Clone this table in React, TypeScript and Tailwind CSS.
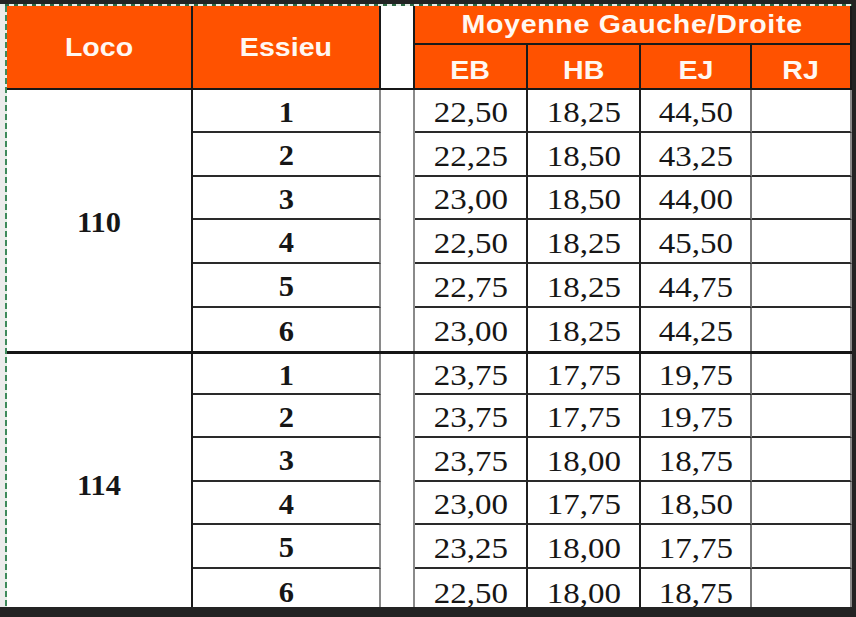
import React from "react";

const COLS = "grid grid-cols-[186px_188px_34px_113px_113px_111px_100px]";
const SANS = "font-['Liberation_Sans',Arial,sans-serif]";
const SERIF = "font-['Liberation_Serif','Times_New_Roman',serif]";

type Group = { loco: string; rows: string[][]; heights: number[] };

const groups: Group[] = [
  {
    loco: "110",
    heights: [43, 44, 43, 44, 44, 43],
    rows: [
      ["22,50", "18,25", "44,50"],
      ["22,25", "18,50", "43,25"],
      ["23,00", "18,50", "44,00"],
      ["22,50", "18,25", "45,50"],
      ["22,75", "18,25", "44,75"],
      ["23,00", "18,25", "44,25"],
    ],
  },
  {
    loco: "114",
    heights: [41, 43, 44, 43, 44, 44],
    rows: [
      ["23,75", "17,75", "19,75"],
      ["23,75", "17,75", "19,75"],
      ["23,75", "18,00", "18,75"],
      ["23,00", "17,75", "18,50"],
      ["23,25", "18,00", "17,75"],
      ["22,50", "18,00", "18,75"],
    ],
  },
];

function HeaderText({ children, wide }: { children: React.ReactNode; wide?: boolean }) {
  return (
    <span
      className={`${SANS} text-[26px] font-bold text-[#fff8f2] leading-none inline-block scale-x-110 ${
        wide ? "tracking-[0.6px]" : ""
      }`}
    >
      {children}
    </span>
  );
}

function Num({ children, bold }: { children: React.ReactNode; bold?: boolean }) {
  return (
    <span
      className={`${SERIF} ${bold ? "font-bold text-[29px] scale-x-105" : "text-[30px] scale-x-110"} text-[#161616] leading-none inline-block pt-[3px]`}
    >
      {children}
    </span>
  );
}

function Header() {
  return (
    <div className={`${COLS} grid-rows-[39px_43px] border-b-2 border-b-[#161616]`}>
      <div className="row-span-2 bg-[#ff5200] border-r-2 border-r-[#1a1a1a] flex items-center justify-center">
        <HeaderText>Loco</HeaderText>
      </div>
      <div className="row-span-2 bg-[#ff5200] border-r-2 border-r-[#1a1a1a] flex items-center justify-center">
        <HeaderText>Essieu</HeaderText>
      </div>
      <div className="row-span-2 bg-white border-r-2 border-r-[#1a1a1a]" />
      <div className="col-span-4 bg-[#ff5200] border-b-2 border-b-[#1a1a1a] border-r-2 border-r-[#1a1a1a] flex items-center justify-center pb-[2px]">
        <HeaderText wide>Moyenne Gauche/Droite</HeaderText>
      </div>
      {["EB", "HB", "EJ", "RJ"].map((h) => (
        <div
          key={h}
          className="bg-[#ff5200] border-r-2 border-r-[#1a1a1a] flex items-center justify-center pt-[6px]"
        >
          <HeaderText>{h}</HeaderText>
        </div>
      ))}
    </div>
  );
}

function GroupBlock({ g }: { g: Group }) {
  const rowsTpl = g.heights.map((h) => `${h}px`).join(" ");
  return (
    <div className={`${COLS} border-b-[3px] border-b-[#161616]`} style={{ gridTemplateRows: rowsTpl }}>
      <div className="row-span-6 col-start-1 row-start-1 border-r-2 border-r-[#1a1a1a] flex items-center justify-center">
        <Num bold>{g.loco}</Num>
      </div>
      <div className="row-span-6 col-start-3 row-start-1 border-r-2 border-r-[#8a8a8a]" />
      {g.rows.map((r, i) => {
        const last = i === g.rows.length - 1;
        const bb = last ? "" : "border-b-2 border-b-[#2a2a2a]";
        const rs = { gridRowStart: i + 1 };
        return (
          <React.Fragment key={i}>
            <div style={rs} className={`col-start-2 ${bb} border-r-2 border-r-[#8a8a8a] flex items-center justify-center`}>
              <Num bold>{i + 1}</Num>
            </div>
            <div style={rs} className={`col-start-4 ${bb} border-r-2 border-r-[#1f1f1f] flex items-center justify-center`}>
              <Num>{r[0]}</Num>
            </div>
            <div style={rs} className={`col-start-5 ${bb} border-r-2 border-r-[#1f1f1f] flex items-center justify-center`}>
              <Num>{r[1]}</Num>
            </div>
            <div style={rs} className={`col-start-6 ${bb} border-r-2 border-r-[#7a7a7a] flex items-center justify-center`}>
              <Num>{r[2]}</Num>
            </div>
            <div style={rs} className={`col-start-7 ${bb} border-r-2 border-r-[#8a8a8a]`} />
          </React.Fragment>
        );
      })}
    </div>
  );
}

export default function App() {
  return (
    <div className="w-[856px] h-[617px] bg-[#232323] pt-[4px] pr-[4px] overflow-hidden">
      <div className="h-[603px] flex flex-col bg-white overflow-hidden">
        <div className="h-[2px] shrink-0 bg-[repeating-linear-gradient(90deg,#e6efe8_0px,#e6efe8_5px,#2e6a45_5px,#2e6a45_9px)]" />
        <div className="flex flex-1 min-h-0">
          <div className="w-[5px] shrink-0 bg-[#ececec]" />
          <div className="w-[2px] shrink-0 bg-[repeating-linear-gradient(180deg,#3f8a5c_0px,#3f8a5c_6px,#e8efe9_6px,#e8efe9_9px)]" />
          <div className="flex-1 min-w-0 overflow-hidden">
            <Header />
            {groups.map((g) => (
              <GroupBlock key={g.loco} g={g} />
            ))}
          </div>
        </div>
      </div>
    </div>
  );
}
